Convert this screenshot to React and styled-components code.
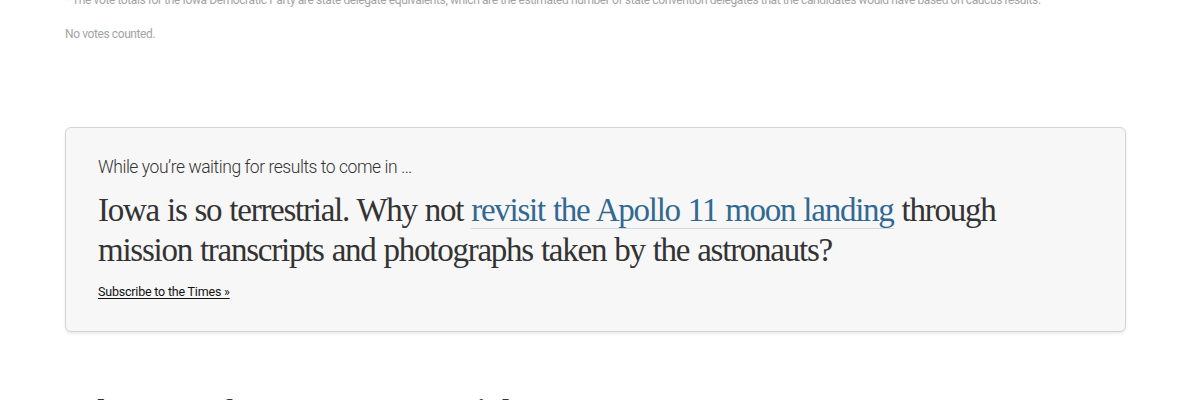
import React from "react";
import styled, { createGlobalStyle } from "styled-components";

const Global = createGlobalStyle`
  html, body { margin: 0; padding: 0; background: #fff; }
  body { font-family: "Liberation Sans", Arial, sans-serif; overflow: hidden; }
`;

const Page = styled.div`
  width: 1200px;
  height: 400px;
  overflow: hidden;
  box-sizing: border-box;
  padding: 0 74px 0 65px;
`;

const Notes = styled.div`
  margin-top: -8px;
  display: flex;
  flex-direction: column;
  gap: 17px;
`;

const Note = styled.p`
  margin: 0;
  font-family: "Roboto", "Liberation Sans", Arial, sans-serif;
  font-size: 12px;
  line-height: 17px;
  color: #a3a3a3;
  letter-spacing: -0.4px;
  white-space: nowrap;
`;

const Card = styled.aside`
  margin-top: 84px;
  background: #f7f7f7;
  border: 1px solid #d3d3d3;
  border-radius: 6px;
  box-shadow: 0 2px 3px rgba(0, 0, 0, 0.08);
  padding: 26px 32px 30px;
`;

const Kicker = styled.p`
  margin: 0;
  font-family: "Roboto", "Liberation Sans", sans-serif;
  font-weight: 300;
  font-size: 17.5px;
  line-height: 26px;
  color: #333;
  letter-spacing: -0.45px;
`;

const Headline = styled.p`
  margin: 10px 0 0;
  font-family: "Liberation Serif", "Times New Roman", serif;
  font-size: 33px;
  line-height: 40px;
  color: #333;
  letter-spacing: -1.25px;
  word-spacing: 1px;
`;

const InlineLink = styled.a`
  color: #326891;
  text-decoration: none;
  border-bottom: 1px solid #ccd9e3;
`;

const Subscribe = styled.a`
  display: inline-block;
  margin-top: 13px;
  font-family: "Roboto", "Liberation Sans", sans-serif;
  font-size: 12.5px;
  line-height: 18px;
  color: #121212;
  text-decoration: underline;
  text-underline-offset: 2px;
  letter-spacing: -0.2px;
`;

const Section = styled.h2`
  margin: 58px 0 0;
  font-family: "Liberation Serif", serif;
  font-weight: 700;
  font-size: 32px;
  line-height: 40px;
  color: #333;
  white-space: nowrap;
`;

export default function App() {
  return (
    <>
      <Global />
      <Page>
        <Notes>
          <Note>
            * The vote totals for the Iowa Democratic Party are state delegate
            equivalents, which are the estimated number of state convention
            delegates that the candidates would have based on caucus results.
          </Note>
          <Note>No votes counted.</Note>
        </Notes>
        <Card>
          <Kicker>While you’re waiting for results to come in …</Kicker>
          <Headline>
            Iowa is so terrestrial. Why not{" "}
            <InlineLink href="#">revisit the Apollo 11 moon landing</InlineLink>{" "}
            through mission transcripts and photographs taken by the astronauts?
          </Headline>
          <Subscribe href="#">Subscribe to the Times »</Subscribe>
        </Card>
        <Section>What Next for Democrats Tonight</Section>
      </Page>
    </>
  );
}
